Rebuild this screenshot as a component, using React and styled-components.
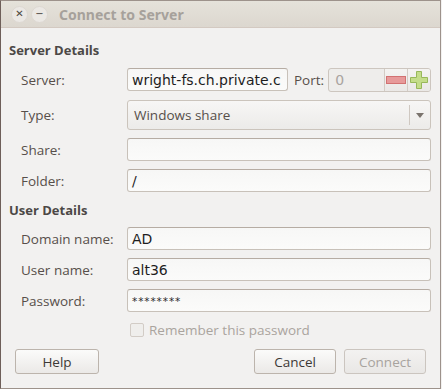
import React from 'react'
import styled, { createGlobalStyle } from 'styled-components'

const GlobalStyle = createGlobalStyle`
  html, body {
    margin: 0;
    padding: 0;
    background: #f2f1f0;
  }
  body {
    font-family: "Open Sans", "Noto Sans", sans-serif;
  }
`

const Window = styled.div`
  width: 441px;
  height: 389px;
  box-sizing: border-box;
  border: 1px solid #9d928b;
  border-left-color: #6e5f59;
  background: #f2f1f0;
  display: flex;
  flex-direction: column;
`

const TitleBar = styled.div`
  height: 26px;
  flex: none;
  display: flex;
  align-items: center;
  gap: 3px;
  padding-left: 10px;
  background: linear-gradient(#e5e2da, #dcd7cf);
  border-bottom: 1px solid #d3c9c1;
`

const WinButton = styled.div`
  width: 15px;
  height: 15px;
  border-radius: 50%;
  background: #ebe8e4;
  border: 1px solid #ddd8d2;
  display: flex;
  align-items: center;
  justify-content: center;
  color: #4a4540;
  font-family: "DejaVu Sans", sans-serif;
  font-size: 10px;
  line-height: 1;
`

const Title = styled.div`
  margin-left: 8px;
  font-family: "Noto Sans", sans-serif;
  font-weight: bold;
  font-size: 14px;
  color: #a6a19b;
`

const Body = styled.div`
  display: flex;
  flex-direction: column;
  padding: 0 9px 0 8px;
`

const SectionTitle = styled.div`
  font-weight: bold;
  font-size: 13px;
  color: #4c4846;
  height: 18px;
  line-height: 18px;
  margin-top: ${p => p.$top}px;
  margin-bottom: ${p => p.$bottom}px;
`

const Rows = styled.div`
  display: flex;
  flex-direction: column;
  gap: 8px;
  padding-left: 12px;
`

const Row = styled.div`
  display: flex;
  align-items: center;
  height: ${p => p.$h || 23}px;
  margin-top: ${p => p.$top || 0}px;
`

const Label = styled.div`
  width: 106px;
  flex: none;
  font-size: 13.5px;
  color: #574f4a;
`

const Entry = styled.div`
  flex: ${p => (p.$w ? 'none' : 1)};
  width: ${p => (p.$w ? `${p.$w}px` : 'auto')};
  height: 23px;
  box-sizing: border-box;
  border: 1px solid #c8c1b9;
  border-top-color: #b6aca3;
  border-radius: 3px;
  background: linear-gradient(#f7f7f6, #fbfbfa);
  display: flex;
  align-items: center;
  padding-left: 4px;
  font-family: "DejaVu Sans", sans-serif;
  font-size: 14px;
  color: #1e1e1e;
  overflow: hidden;
  white-space: nowrap;
`

const Password = styled.span`
  font-size: 10.5px;
  letter-spacing: 0.9px;
  color: #2a2a2a;
`

const PortLabel = styled.div`
  margin: 0 4px 0 6px;
  font-size: 13.5px;
  color: #574f4a;
`

const Spin = styled.div`
  flex: 1;
  height: 24px;
  box-sizing: border-box;
  border: 1px solid #cdc6bf;
  border-radius: 3px;
  display: flex;
  overflow: hidden;
  background: #eeedeb;
`

const SpinValue = styled.div`
  flex: 1;
  display: flex;
  align-items: center;
  padding-left: 6px;
  font-family: "DejaVu Sans", sans-serif;
  font-size: 14px;
  color: #a9a49f;
`

const SpinButton = styled.div`
  width: 22px;
  border-left: 1px solid #d3ccc5;
  background: linear-gradient(#f4f3f1, #eae8e6);
  display: flex;
  align-items: center;
  justify-content: center;
`

const Combo = styled.div`
  flex: 1;
  height: 30px;
  box-sizing: border-box;
  border: 1px solid #cbc4bc;
  border-radius: 3px;
  background: linear-gradient(#f7f6f5, #ecebe9);
  display: flex;
  align-items: center;
  padding-left: 6px;
  font-size: 13.5px;
  color: #574f4a;
`

const ComboText = styled.div`
  flex: 1;
`

const ComboArrow = styled.div`
  width: 20px;
  height: 20px;
  border-left: 1px solid #cfc8c1;
  display: flex;
  align-items: center;
  justify-content: center;
`

const Check = styled.div`
  display: flex;
  align-items: center;
  gap: 5px;
  margin: 10px 0 0 121px;
  height: 15px;
  font-size: 13.5px;
  color: #aaa49e;
`

const Box = styled.div`
  width: 12px;
  height: 12px;
  border: 1px solid #d2ccc6;
  border-radius: 2px;
  background: #efeeec;
`

const ButtonBar = styled.div`
  display: flex;
  align-items: center;
  gap: 8px;
  margin: 12px 5px 0 6px;
`

const Spacer = styled.div`
  flex: 1;
`

const Button = styled.div`
  width: ${p => p.$w}px;
  height: 25px;
  box-sizing: border-box;
  border: 1px solid #bcb4ac;
  border-radius: 3px;
  background: linear-gradient(#fbfbfa, #ebe9e7);
  display: flex;
  align-items: center;
  justify-content: center;
  font-size: 13.5px;
  color: ${p => (p.$disabled ? '#a8a39e' : '#3d3936')};
  ${p => p.$disabled && 'border-color: #cbc5bf; background: linear-gradient(#f3f2f1, #e9e7e5);'}
`

const Minus = () => (
  <svg width="20" height="8" viewBox="0 0 20 8">
    <rect x="0.5" y="0.5" width="19" height="7" fill="#e79a9a" stroke="#d27272" />
  </svg>
)

const Plus = () => (
  <svg width="18" height="18" viewBox="0 0 18 18">
    <path
      d="M6.5 0.5h5v6h6v5h-6v6h-5v-6h-6v-5h6z"
      fill="#c4dd8a"
      stroke="#98b85a"
    />
  </svg>
)

const Arrow = () => (
  <svg width="8" height="5" viewBox="0 0 8 5">
    <path d="M0 0h8L4 5z" fill="#7a736d" />
  </svg>
)

export default function App() {
  return (
    <>
      <GlobalStyle />
      <Window>
        <TitleBar>
          <WinButton>✕</WinButton>
          <WinButton>−</WinButton>
          <Title>Connect to Server</Title>
        </TitleBar>
        <Body>
          <SectionTitle $top={13} $bottom={9}>Server Details</SectionTitle>
          <Rows>
            <Row>
              <Label>Server:</Label>
              <Entry $w={161}>wright-fs.ch.private.c</Entry>
              <PortLabel>Port:</PortLabel>
              <Spin>
                <SpinValue>0</SpinValue>
                <SpinButton><Minus /></SpinButton>
                <SpinButton><Plus /></SpinButton>
              </Spin>
            </Row>
            <Row $h={30} $top={1}>
              <Label>Type:</Label>
              <Combo>
                <ComboText>Windows share</ComboText>
                <ComboArrow><Arrow /></ComboArrow>
              </Combo>
            </Row>
            <Row>
              <Label>Share:</Label>
              <Entry />
            </Row>
            <Row>
              <Label>Folder:</Label>
              <Entry>/</Entry>
            </Row>
          </Rows>
          <SectionTitle $top={9} $bottom={8}>User Details</SectionTitle>
          <Rows>
            <Row>
              <Label>Domain name:</Label>
              <Entry>AD</Entry>
            </Row>
            <Row>
              <Label>User name:</Label>
              <Entry>alt36</Entry>
            </Row>
            <Row>
              <Label>Password:</Label>
              <Entry><Password>********</Password></Entry>
            </Row>
          </Rows>
          <Check>
            <Box />
            Remember this password
          </Check>
          <ButtonBar>
            <Button $w={84}>Help</Button>
            <Spacer />
            <Button $w={82}>Cancel</Button>
            <Button $w={82} $disabled>Connect</Button>
          </ButtonBar>
        </Body>
      </Window>
    </>
  )
}
